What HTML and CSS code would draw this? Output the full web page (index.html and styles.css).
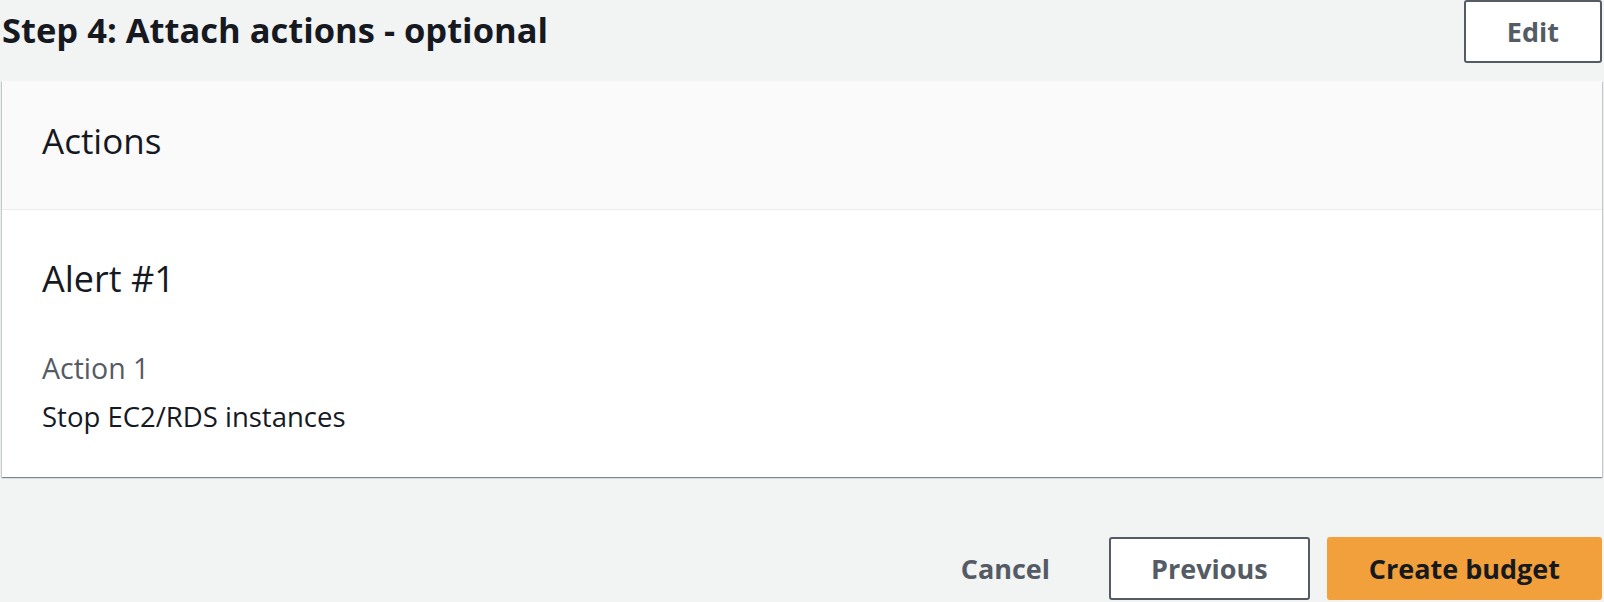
FILE: index.html
```html
<!DOCTYPE html>
<html lang="en">
<head>
<meta charset="utf-8">
<title>Step 4: Attach actions - optional</title>
<link rel="stylesheet" href="styles.css">
</head>
<body>
<div class="page">
  <div class="step-header">
    <h2 class="step-title">Step 4: Attach actions - optional</h2>
    <button class="btn btn-normal btn-edit" type="button">Edit</button>
  </div>
  <section class="card">
    <div class="card-header">
      <h2 class="card-title">Actions</h2>
    </div>
    <div class="card-body">
      <h3 class="alert-title">Alert #1</h3>
      <div class="kv-label">Action 1</div>
      <div class="kv-value">Stop EC2/RDS instances</div>
    </div>
  </section>
  <div class="footer">
    <button class="btn btn-link" type="button">Cancel</button>
    <button class="btn btn-normal" type="button">Previous</button>
    <button class="btn btn-primary" type="button">Create budget</button>
  </div>
</div>
</body>
</html>
```

FILE: styles.css
```css
html, body {
  margin: 0;
  padding: 0;
  background: #f2f3f3;
}

body {
  font-family: "Open Sans", "Noto Sans", "Liberation Sans", sans-serif;
  color: #16191f;
  width: 1604px;
  height: 602px;
  overflow: hidden;
}

.page {
  padding: 0 2px;
}

.step-header {
  display: flex;
  justify-content: space-between;
  align-items: flex-start;
  height: 63px;
}

.step-title {
  margin: 0;
  padding-top: 8px;
  font-size: 34.5px;
  line-height: 44px;
  font-weight: 700;
  color: #16191f;
}

.btn {
  font-family: inherit;
  font-size: 27px;
  font-weight: 700;
  line-height: 59px;
  height: 63px;
  padding: 0 40px;
  border-radius: 3px;
  border: 2px solid transparent;
  background: transparent;
  cursor: pointer;
  white-space: nowrap;
}

.btn-normal {
  background: #ffffff;
  border-color: #545b64;
  color: #545b64;
}

.btn-edit {
  padding: 0 41px;
}

.btn-link {
  color: #545b64;
}

.btn-primary {
  background: #f1a03b;
  border-color: #f1a03b;
  color: #16191f;
}

.card {
  margin-top: 18px;
  background: #ffffff;
  box-shadow: 0 1px 1px 0 rgba(0, 28, 36, 0.3), 1px 1px 1px 0 rgba(0, 28, 36, 0.15), -1px 1px 1px 0 rgba(0, 28, 36, 0.15);
}

.card-header {
  background: #fafafa;
  border-bottom: 1px solid #eaeded;
  padding: 39px 40px 47px;
}

.card-title {
  margin: 0;
  font-size: 35px;
  line-height: 42px;
  font-weight: 400;
  color: #16191f;
}

.card-body {
  padding: 49px 40px 38px;
}

.alert-title {
  margin: 0;
  font-size: 36px;
  line-height: 40px;
  font-weight: 400;
  color: #16191f;
}

.kv-label {
  margin-top: 47px;
  font-size: 28.5px;
  line-height: 44px;
  color: #545b64;
}

.kv-value {
  margin-top: 5px;
  font-size: 27.5px;
  line-height: 44px;
  color: #16191f;
}

.footer {
  margin-top: 60px;
  display: flex;
  justify-content: flex-end;
  gap: 17px;
}
```
